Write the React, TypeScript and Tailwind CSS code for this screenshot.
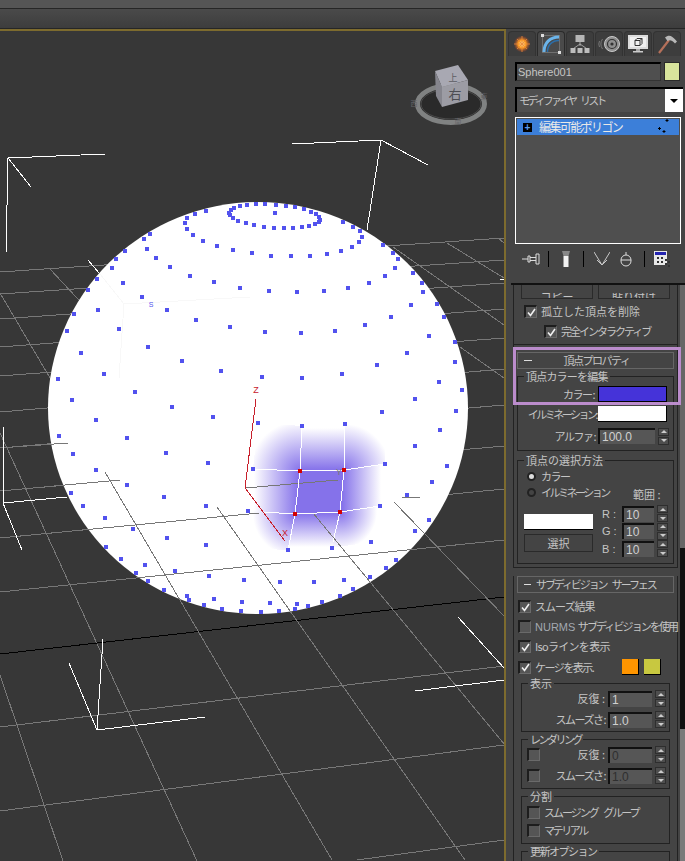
import type { ReactNode } from 'react';

type Seg = [number, number, number, number];

// grid lines behind the sphere
const gridBack: Seg[] = [
  [0, 272, 504, 238], [0, 294, 504, 260], [0, 319, 504, 283], [0, 347, 504, 309],
  [0, 376, 504, 338], [0, 412, 504, 369], [0, 448, 504, 405], [0, 491, 504, 446],
  [0, 538, 504, 489], [0, 592, 504, 540], [0, 727, 504, 666], [0, 811, 504, 745], [357, 860, 504, 840],
  [49, 268, 90, 312], [0, 293, 60, 395], [0, 433, 197, 861], [105, 472, 332, 860], [217, 507, 465, 860],
  [313, 513, 505, 745], [394, 502, 505, 617], [0, 675, 63, 861],
  [447, 243, 504, 278], [393, 247, 504, 325], [460, 347, 504, 378], [498, 238, 504, 243],
];

// grid lines in front of the sphere
const gridFront: Seg[] = [
  [0, 448, 68, 443], [0, 491, 120, 480], [245, 488, 338, 480], [0, 538, 259, 513], [402, 498, 420, 497],
  [0, 592, 504, 540], [105, 472, 332, 860], [217, 507, 465, 860], [313, 513, 505, 745], [394, 502, 505, 617],
];

const brackets: Seg[] = [
  [8, 158, 105, 154], [8, 158, 6, 253], [8, 158, 31, 187],
  [381, 140, 292, 144], [381, 140, 428, 165], [381, 140, 367, 230],
  [88, 260, 99, 273], [3, 427, 3, 503], [3, 503, 67, 497], [3, 503, 22, 550],
  [97, 730, 103, 639], [97, 730, 205, 717], [97, 730, 69, 663],
  [458, 617, 504, 668], [415, 691, 504, 680], [500, 279, 504, 279],
];

const wire: Seg[] = [
  [302, 426, 300, 471], [300, 471, 295, 514], [295, 514, 288, 550],
  [345, 424, 344, 470], [344, 470, 340, 512], [340, 512, 333, 542],
  [253, 469, 300, 471], [300, 471, 344, 470], [344, 470, 385, 464],
  [263, 512, 295, 514], [295, 514, 340, 512], [340, 512, 380, 506],
];

const nearDots = [
  [258, 423], [302, 426], [345, 424], [253, 469], [385, 464], [248, 511],
  [380, 506], [288, 550], [332, 548], [371, 542],
];
const redDots = [[300, 471], [344, 470], [295, 514], [340, 512]];
const cornerRadius = [50, 46, 42, 37];

// how much each ring opens up, read off the reference (camera is close, so not a plain ellipse)
const ringOpen = [0.26, 0.29, 0.33, 0.42, 0.52, 0.5, 0.47, 0.395, 0.3, 0.2, 0.15, 0.12, 0.1];

// vertices of the sphere, 14 rings of 28 points
function sphereDots() {
  const out: number[][] = [[275, 213]];
  for (let i = 1; i < 14; i++) {
    const t = (i * Math.PI) / 14;
    const r = 204 * Math.sin(t);
    const xc = 258 + 17 * Math.cos(t);
    const yc = 408 + 208 * Math.sin(t - (72.8 * Math.PI) / 180);
    for (let j = 0; j < 28; j++) {
      const l = ((j * 360) / 28 + 11.65) * (Math.PI / 180);
      const z = Math.cos(t) * 0.308 + Math.sin(t) * Math.cos(l) * 0.952;
      if (z < -0.02) continue;
      const dx = r * Math.sin(l);
      let x = xc + dx;
      let y = yc - ringOpen[i - 1] * r * (1 - Math.cos(l)) + 0.07 * dx;
      const n = Math.hypot((x - 258) / 210, (y - 408) / 206);
      if (n > 1.3) continue;
      // dots past the rim sit on the silhouette
      if (n > 0.99) {
        x = 258 + ((x - 258) / n) * 0.99;
        y = 408 + ((y - 408) / n) * 0.99;
      }
      if (x > 240 && x < 395 && y > 412 && y < 556) continue;
      out.push([Math.round(x), Math.round(y)]);
    }
  }
  return out;
}

function Lines({ items, cls }: { items: Seg[]; cls: string }) {
  return (
    <g className={cls}>
      {items.map(([x1, y1, x2, y2], i) => (
        <line key={i} x1={x1} y1={y1} x2={x2} y2={y2} />
      ))}
    </g>
  );
}

function Viewport() {
  const purple = '#8572ea';
  return (
    <svg viewBox="0 31 504 830" className="block w-[504px] h-[830px]" shapeRendering="crispEdges">
      <defs>
        <linearGradient id="gt" gradientUnits="userSpaceOnUse" x1="0" y1="470" x2="0" y2="428">
          <stop offset="0" stopColor={purple} /><stop offset="1" stopColor="#fff" />
        </linearGradient>
        <linearGradient id="gr" gradientUnits="userSpaceOnUse" x1="342" y1="0" x2="381" y2="0">
          <stop offset="0" stopColor={purple} /><stop offset="1" stopColor="#fff" />
        </linearGradient>
        <linearGradient id="gb" gradientUnits="userSpaceOnUse" x1="0" y1="513" x2="0" y2="547">
          <stop offset="0" stopColor={purple} /><stop offset="1" stopColor="#fff" />
        </linearGradient>
        <linearGradient id="gl" gradientUnits="userSpaceOnUse" x1="298" y1="0" x2="254" y2="0">
          <stop offset="0" stopColor={purple} /><stop offset="1" stopColor="#fff" />
        </linearGradient>
        {redDots.map(([x, y], i) => (
          <radialGradient key={i} id={`gc${i}`} gradientUnits="userSpaceOnUse" cx={x} cy={y} r={cornerRadius[i]}>
            <stop offset="0" stopColor={purple} /><stop offset="1" stopColor="#fff" />
          </radialGradient>
        ))}
      </defs>

      <Lines items={gridBack} cls="stroke-[#787878]" />
      <line x1="0" y1="654" x2="504" y2="597" stroke="#000" />

      {/* nav cube */}
      <g shapeRendering="auto">
        <ellipse cx="451" cy="104" rx="33.500" ry="18.500" fill="#2a2a2a" stroke="#808282" strokeWidth="5" />
        <ellipse cx="451" cy="104" rx="30" ry="15" fill="none" stroke="#4c4c4c" strokeWidth="1" />
        <polygon points="435,71 458,65 468,80 442,87" fill="#a8a8b2" />
        <polygon points="435,71 442,87 442,107 436,96" fill="#85858d" />
        <polygon points="442,87 468,80 468,100 442,107" fill="#9c9ca4" />
        <text x="453" y="81" fontSize="9" fill="#5c5c62" textAnchor="middle" fontFamily="Noto Sans CJK JP">上</text>
        <text x="455" y="99" fontSize="13" fill="#4c4c52" textAnchor="middle" fontFamily="Noto Sans CJK JP">右</text>
        <text x="414" y="106" fontSize="7" fill="#66666a" textAnchor="middle" fontFamily="Noto Sans CJK JP">西</text>
        <text x="458" y="124" fontSize="7" fill="#66666a" textAnchor="middle" fontFamily="Noto Sans CJK JP">南</text>
        <text x="484" y="99" fontSize="7" fill="#58585c" textAnchor="middle" fontFamily="Noto Sans CJK JP">東</text>
      </g>

      <ellipse cx="258" cy="408" rx="210" ry="206" fill="#fff" shapeRendering="auto" />
      <polyline points="100,274 124,304 250,297" fill="none" stroke="#f8f8f8" />
      <line x1="124" y1="304" x2="119" y2="378" stroke="#f8f8f8" />

      {/* soft selection falloff */}
      <polygon points="302,426 345,424 344,470 300,471" fill="url(#gt)" />
      <polygon points="344,470 385,464 380,506 340,512" fill="url(#gr)" />
      <polygon points="295,514 340,512 332,548 288,550" fill="url(#gb)" />
      <polygon points="253,469 300,471 295,514 248,511" fill="url(#gl)" />
      <polygon points="258,423 302,426 300,471 253,469" fill="url(#gc0)" />
      <polygon points="345,424 385,422 385,464 344,470" fill="url(#gc1)" />
      <polygon points="248,511 295,514 288,550 245,548" fill="url(#gc2)" />
      <polygon points="340,512 380,506 371,542 332,548" fill="url(#gc3)" />
      <polygon points="300,471 344,470 340,512 295,514" fill={purple} />

      <Lines items={gridFront} cls="stroke-[#777777]" />
      <Lines items={wire} cls="stroke-white" />
      <Lines items={brackets} cls="stroke-white" />
      <polyline points="256,399 245,488 285,541" fill="none" stroke="#c8202c" />

      <text x="256" y="393" fontSize="9" fill="#c8202c" textAnchor="middle" fontFamily="Liberation Sans">Z</text>
      <text x="285" y="536" fontSize="9" fill="#c8202c" textAnchor="middle" fontFamily="Liberation Sans">X</text>
      <text x="339" y="475" fontSize="9" fill="#777" textAnchor="middle" fontFamily="Liberation Sans">Y</text>
      <text x="151" y="307" fontSize="7" fill="#5252ee" textAnchor="middle" fontFamily="Liberation Sans">S</text>

      {sphereDots().concat(nearDots).map(([x, y], i) => (
        <rect key={i} x={x - 2} y={y - 2} width="4" height="4" fill="#5252ee" />
      ))}
      {redDots.map(([x, y], i) => (
        <rect key={i} x={x - 2} y={y - 2} width="4" height="4" fill="#d40000" />
      ))}
    </svg>
  );
}

function Tab({ active, children }: { active?: boolean; children: ReactNode }) {
  return (
    <div className={`w-[28px] h-[25px] rounded-t-[4px] flex items-center justify-center ${active ? 'bg-[#4a4a4a] border-t border-x border-[#2a2a2a]' : 'bg-[#3d3d3d] border-t border-x border-[#333333]'}`}>
      {children}
    </div>
  );
}

function Tabs() {
  return (
    <div className="flex gap-[1px] pl-[2px] pt-[2px]">
      <Tab>
        <svg width="18" height="18" viewBox="0 0 18 18">
          <defs>
            <radialGradient id="sun">
              <stop offset="0" stopColor="#fff3b0" /><stop offset="0.5" stopColor="#ff9a1e" /><stop offset="1" stopColor="#a3402a" stopOpacity="0.2" />
            </radialGradient>
          </defs>
          <circle cx="9" cy="9" r="8" fill="url(#sun)" />
          <path d="M9 1v16M1 9h16M4 4l10 10M14 4L4 14" stroke="#e8883a" strokeWidth="0.8" />
        </svg>
      </Tab>
      <Tab active>
        <svg width="20" height="20" viewBox="0 0 20 20">
          <rect x="1.5" y="1.5" width="17" height="17" fill="none" stroke="#8a8a8a" strokeWidth="0.6" />
          <path d="M3 18C3 9 9 3 18 3" fill="none" stroke="#6bb4ea" strokeWidth="3" />
          <path d="M6.5 18C6.5 11 11 6.5 18 6.5" fill="none" stroke="#2c6ea8" strokeWidth="1.5" />
          <rect x="0" y="0" width="3" height="3" fill="#ddd" />
          <rect x="17" y="17" width="3" height="3" fill="#ddd" />
        </svg>
      </Tab>
      <Tab>
        <svg width="20" height="20" viewBox="0 0 20 20">
          <rect x="5.5" y="1" width="9" height="7" fill="#b5b5b5" />
          <path d="M10 8v4M10 10L3.500 14.500M10 10l6.500 4.500" stroke="#bbb" strokeWidth="0.8" fill="none" />
          <rect x="0.500" y="14" width="5" height="5" fill="#bdbdbd" />
          <rect x="7.500" y="14" width="5" height="5" fill="#bdbdbd" />
          <rect x="14.500" y="14" width="5" height="5" fill="#bdbdbd" />
        </svg>
      </Tab>
      <Tab>
        <svg width="24" height="18" viewBox="0 0 24 18" fill="none">
          <circle cx="15" cy="9" r="7.500" fill="#8f8f8f" stroke="#c8c8c8" />
          <circle cx="15" cy="9" r="4.500" stroke="#333" strokeWidth="1.200" />
          <circle cx="15" cy="9" r="1.600" fill="#333" />
          <path d="M5.500 4a9 9 0 0 0 0 10M2.500 6a7 7 0 0 0 0 6" stroke="#777" />
        </svg>
      </Tab>
      <Tab>
        <svg width="22" height="20" viewBox="0 0 22 20" fill="none">
          <rect x="1" y="1" width="20" height="14" fill="#dcdcdc" />
          <rect x="3" y="3" width="16" height="10" fill="#f0f0f0" />
          <path d="M8 6.500l2-2h5v5l-2 2H8zM8 6.500h5v5M13 6.500l2-2" stroke="#333" />
          <rect x="9" y="15" width="4" height="2" fill="#aaa" />
          <rect x="6" y="17" width="10" height="1.500" fill="#ccc" />
        </svg>
      </Tab>
      <Tab>
        <svg width="22" height="20" viewBox="0 0 22 20" fill="none">
          <path d="M3 19L13 6" stroke="#b5705a" strokeWidth="2.200" />
          <path d="M9 3.500c4-3 7-2 12 4l-2 2c-3-3-5-4-7.500-2.500z" fill="#b8b8b8" />
        </svg>
      </Tab>
    </div>
  );
}

function Toolbar() {
  const sep = <div className="w-px h-[16px] bg-black" />;
  return (
    <div className="mt-[5px] h-[19px] flex items-center pl-[16px]">
      <svg width="18" height="12" viewBox="0 0 18 12" className="mr-[8px]"><path d="M0 6h6M6 3h2v6H6zM8 4.500h6M8 7.500h6M14 1h3v10h-3z" stroke="#ddd" fill="none" /></svg>
      {sep}
      <svg width="10" height="16" viewBox="0 0 10 16" className="mx-[12px]"><rect x="2.500" y="5" width="5" height="11" fill="#f2f2f2" /><path d="M1 0h8L7.500 5h-5z" fill="#888" /></svg>
      {sep}
      <svg width="16" height="16" viewBox="0 0 16 16" fill="none" className="ml-[10px]"><path d="M0 1l8 13 8-13M3 9l5 5 5-5" stroke="#c8c8c8" /></svg>
      <svg width="12" height="16" viewBox="0 0 12 16" fill="none" className="ml-[10px] mr-[12px]"><rect x="1" y="4" width="10" height="11" rx="5" stroke="#ddd" /><path d="M1 9h10M6 4V1" stroke="#ddd" /></svg>
      {sep}
      <svg width="17" height="16" viewBox="0 0 17 16" className="ml-[9px]"><rect x="0" y="0" width="13" height="14" fill="#e8e8e8" /><rect x="1" y="1" width="11" height="3" fill="#2424b0" /><path d="M3 6h2v2H3zM7 6h2v2H7zM3 10h2v2H3zM7 10h2v2H7zM11 8h2v2h-2zM14 10h2v2h-2zM11 12h2v2h-2zM14 14h2v2h-2z" fill="#333" /></svg>
    </div>
  );
}

function CheckBox({ on }: { on?: boolean }) {
  return (
    <div className="w-[13px] h-[13px] shrink-0 bg-[#555555] border-t-2 border-l-2 border-t-[#1d1d1d] border-l-[#1d1d1d] border-b border-r border-b-[#6a6a6a] border-r-[#6a6a6a] flex items-center justify-center">
      {on && (
        <svg width="9" height="9" viewBox="0 0 9 9" fill="none"><path d="M1 4.500l2.500 3L8 1" stroke="#f0f0f0" strokeWidth="1.600" /></svg>
      )}
    </div>
  );
}

function CheckRow({ on, children, cls = '', text = '' }: { on?: boolean; children: ReactNode; cls?: string; text?: string }) {
  return (
    <div className={`flex items-center gap-[4px] ${cls}`}>
      <CheckBox on={on} />
      <span className={`whitespace-nowrap leading-none ${text}`}>{children}</span>
    </div>
  );
}

function Spin() {
  return (
    <div className="w-[11px] h-[17px] shrink-0 flex flex-col gap-px">
      <div className="flex-1 bg-[#4e4e4e] border border-[#2e2e2e] flex items-center justify-center">
        <div className="w-0 h-0 border-x-[3px] border-x-transparent border-b-[3px] border-b-[#cccccc]" />
      </div>
      <div className="flex-1 bg-[#4e4e4e] border border-[#2e2e2e] flex items-center justify-center">
        <div className="w-0 h-0 border-x-[3px] border-x-transparent border-t-[3px] border-t-[#cccccc]" />
      </div>
    </div>
  );
}

function Spinner({ value, w, dim }: { value: string; w: string; dim?: boolean }) {
  return (
    <div className="flex items-center gap-[3px]">
      <div className={`${w} h-[16px] bg-[#565656] border-t-2 border-l-2 border-[#111111] flex items-center pl-[2px] font-['Liberation_Sans',sans-serif] text-[12px] ${dim ? 'text-[#2f2f2f]' : 'text-[#d0d0d0]'}`}>
        {value}
      </div>
      <Spin />
    </div>
  );
}

function Group({ title, cls, text = '', children }: { title: string; cls: string; text?: string; children?: ReactNode }) {
  return (
    <div className={`relative border border-[#222222] ${cls}`}>
      <span className={`absolute -top-[8px] left-[6px] bg-[#444444] px-[2px] leading-[14px] whitespace-nowrap ${text}`}>{title}</span>
      {children}
    </div>
  );
}

function Header({ children, cls = '' }: { children: ReactNode; cls?: string }) {
  return (
    <div className={`h-[17px] mx-[3px] border border-[#666666] bg-[#444444] flex items-center leading-none ${cls}`}>
      {children}
    </div>
  );
}

function VertexRollout() {
  return (
    <div className="pt-[7px] border-x border-b border-[#222222] h-[223px] mb-[8px]">
      <Header cls="relative justify-center">
        <span className="absolute left-[6px] top-[7px] w-[8px] h-[1px] bg-[#dddddd]" />
        <span className="pl-[2px] tracking-[-1.5px]">頂点プロパティ</span>
      </Header>
      <Group title="頂点カラーを編集" text="tracking-[-0.8px]" cls="mt-[7px] mx-[3px] h-[75px]">
        <div className="flex items-center justify-end h-[16px] mt-[9px] pr-[6px] gap-[4px]">
          <span className="tracking-[-1.5px] whitespace-nowrap">カラー :</span>
          <div className="w-[69px] h-[16px] bg-[#4533d9] border border-black" />
        </div>
        <div className="flex items-center justify-end h-[16px] mt-[4px] pr-[6px] gap-[2px]">
          <span className="tracking-[-2.5px] whitespace-nowrap">イルミネーション:</span>
          <div className="w-[69px] h-[16px] bg-white border-b border-r border-black" />
        </div>
        <div className="flex items-center justify-end h-[16px] mt-[6px] pr-[4px] gap-[3px]">
          <span className="tracking-[-1.5px] whitespace-nowrap">アルファ :</span>
          <Spinner value="100.0" w="w-[57px]" />
        </div>
      </Group>
      <Group title="頂点の選択方法" cls="mt-[9px] mx-[3px] h-[104px]">
        <div className="flex items-center gap-[5px] pl-[9px] mt-[7px] h-[16px]">
          <span className="w-[9px] h-[9px] rounded-full bg-[#dddddd] border-2 border-[#222222]" />
          <span className="tracking-[-1.5px]">カラー</span>
        </div>
        <div className="flex items-center gap-[5px] pl-[9px] h-[16px]">
          <span className="w-[9px] h-[9px] rounded-full bg-[#444444] border-2 border-[#222222]" />
          <span className="tracking-[-2.5px] w-[76px] whitespace-nowrap">イルミネーション</span>
          <span className="ml-[11px] mt-[4px] whitespace-nowrap">範囲 :</span>
        </div>
        <div className="flex mt-[5px] pl-[6px]">
          <div className="w-[69px] mt-[9px]">
            <div className="h-[16px] bg-white border-b border-black" />
            <div className="h-[18px] mt-[4px] border border-[#2a2a2a] flex items-center justify-center">選択</div>
          </div>
          <div className="ml-[9px] font-['Liberation_Sans',sans-serif] text-[11px]">
            {['R', 'G', 'B'].map((c) => (
              <div key={c} className="flex items-center h-[17.500px] gap-[4px]">
                <span className="w-[16px] whitespace-nowrap">{c} :</span>
                <Spinner value="10" w="w-[32px]" />
              </div>
            ))}
          </div>
        </div>
      </Group>
    </div>
  );
}

function SubdivRollout() {
  return (
    <div className="border-x border-[#222222] h-[300px]">
      <Header cls="gap-[5px] px-[6px]">
        <span className="w-[7px] h-px bg-[#dddddd] shrink-0" />
        <span className="whitespace-nowrap tracking-[-2.1px] [word-spacing:5px]">サブディビジョン サーフェス</span>
      </Header>
      <div className="pl-[4px] mt-[7px] flex flex-col gap-[7px] whitespace-nowrap">
        <CheckRow on text="tracking-[-1px]">スムーズ結果</CheckRow>
        <CheckRow><span className="text-[#a3a9b0] font-['Liberation_Sans',sans-serif]">NURMS</span> <span className="tracking-[-1.900px]">サブディビジョンを使用</span></CheckRow>
        <CheckRow on text="tracking-[-0.7px]">Isoラインを表示</CheckRow>
        <div className="flex items-center -mt-[1px]">
          <CheckRow on cls="w-[104px]" text="tracking-[-1.500px]">ケージを表示.</CheckRow>
          <div className="w-[17px] h-[16px] bg-[#ff9500] border-r border-b border-black" />
          <div className="w-[17px] h-[16px] ml-[5px] bg-[#c8c840] border-r border-b border-black" />
        </div>
      </div>
      <Group title="表示" cls="mt-[8px] mx-[7px] h-[49px]">
        <div className="flex items-center justify-end h-[17px] mt-[6px] pr-[3px] gap-[3px]"><span className="whitespace-nowrap">反復 :</span><Spinner value="1" w="w-[44px]" /></div>
        <div className="flex items-center justify-end h-[17px] mt-[4px] pr-[3px] gap-[3px]"><span className="whitespace-nowrap tracking-[-1.5px]">スムーズさ :</span><Spinner value="1.0" w="w-[44px]" /></div>
      </Group>
      <Group title="レンダリング" text="tracking-[-2.500px]" cls="mt-[7px] mx-[7px] h-[50px]">
        <div className="flex items-center h-[17px] mt-[6px] pl-[5px] pr-[3px] gap-[3px]"><CheckBox /><span className="ml-auto whitespace-nowrap">反復 :</span><Spinner value="0" w="w-[44px]" dim /></div>
        <div className="flex items-center h-[17px] mt-[4px] pl-[5px] pr-[3px] gap-[3px]"><CheckBox /><span className="ml-auto whitespace-nowrap tracking-[-1.5px]">スムーズさ :</span><Spinner value="1.0" w="w-[44px]" dim /></div>
      </Group>
      <Group title="分割" cls="mt-[7px] mx-[7px] h-[48px]">
        <div className="pl-[5px] pt-[9px] flex flex-col gap-[5px]">
          <CheckRow text="tracking-[-2px] [word-spacing:5px]">スムージング グループ</CheckRow>
          <CheckRow text="tracking-[-2.400px]">マテリアル</CheckRow>
        </div>
      </Group>
      <Group title="更新オプション" text="tracking-[-1.500px]" cls="mt-[7px] mx-[7px] h-[30px]" />
    </div>
  );
}

function Panel() {
  return (
    <div className="flex-1 h-full bg-[#444444] flex flex-col overflow-hidden font-['Noto_Sans_CJK_JP',sans-serif] text-[11px] text-[#c4c4c4]">
      <Tabs />
      <div className="mt-[6px] ml-[9px] flex gap-[3px] h-[19px]">
        <div className="w-[146px] bg-[#4f4f4f] border-t-2 border-l-2 border-black border-b border-r border-b-[#333333] border-r-[#333333] flex items-center pl-[1px] font-['Liberation_Sans',sans-serif] text-[11px]">Sphere001</div>
        <div className="w-[16px] bg-[#d8e49c] border border-[#2a2a2a]" />
      </div>
      <div className="mt-[6px] ml-[9px] w-[168px] h-[25px] bg-[#4f4f4f] border-t-2 border-l-2 border-black flex items-center">
        <span className="pl-[2px] flex-1 tracking-[-2.8px] [word-spacing:5px] whitespace-nowrap">モディファイヤ リスト</span>
        <div className="w-[18px] h-full bg-white flex items-center justify-center">
          <div className="w-0 h-0 border-x-[4px] border-x-transparent border-t-[4px] border-t-black" />
        </div>
      </div>
      <div className="mt-[5px] ml-[9px] w-[166px] h-[127px] bg-[#4f4f4f] border border-white p-px">
        <div className="h-[16px] bg-[#3c7fd9] flex items-center pl-[6px] text-[#e8e8e8] text-[12px] relative">
          <span className="w-[9px] h-[9px] bg-black text-[#5a9cf0] text-[10px] leading-[9px] text-center font-bold font-['Liberation_Sans',sans-serif]">+</span>
          <span className="ml-[7px] tracking-[-1.6px]">編集可能ポリゴン</span>
          <svg width="12" height="14" viewBox="0 0 12 14" className="absolute right-[9px] top-0"><path d="M9 0v3M7.500 1.500h3M1.500 8v3M0 9.500h3M6 11v3M4.500 12.500h3" stroke="#000" /></svg>
        </div>
      </div>
      <Toolbar />
      <div className="mt-[15px] ml-[5px] h-[2px] bg-[#111111] shrink-0" />
      <div className="flex flex-1 min-h-0">
        <div className="w-[174px] pl-[7px] pr-[2px] overflow-hidden">
          <div className="h-[60px] border-x border-b border-[#222222]">
            <div className="flex gap-[5px] px-[7px] h-[14px] overflow-hidden">
              {['コピー', '貼り付け'].map((t) => (
                <div key={t} className="w-[72px] h-[14px] border border-[#2a2a2a] border-t-0 flex items-end justify-center">
                  <span className="leading-[7px] h-[5px] overflow-hidden text-[11px]">{t}</span>
                </div>
              ))}
            </div>
            <CheckRow on cls="ml-[10px] mt-[6px]">孤立した頂点を削除</CheckRow>
            <CheckRow on cls="ml-[30px] mt-[7px]" text="tracking-[-2px]">完全インタラクティブ</CheckRow>
          </div>
          <VertexRollout />
          <SubdivRollout />
        </div>
        <div className="w-[5px] flex flex-col">
          <div className="h-[263px] bg-[#666666]" />
          <div className="h-[181px] bg-[#111111]" />
          <div className="flex-1 bg-[#7a7a7a]" />
        </div>
      </div>
    </div>
  );
}

export default function App() {
  return (
    <div className="relative w-[685px] h-[861px] overflow-hidden bg-[#444444] flex flex-col">
      {/* title strips */}
      <div className="h-[8px] bg-[#555555] shrink-0" />
      <div className="h-[21px] shrink-0 border-y border-[#262626] bg-gradient-to-b from-[#4a4a4a] to-[#3d3d3d]" />

      <div className="flex flex-1 min-h-0">
        <div className="w-[506px] h-[832px] bg-[#373737] border-t-2 border-r-2 border-[#7d6b2e] overflow-hidden shrink-0">
          <Viewport />
        </div>
        <Panel />
      </div>

      {/* highlight frame drawn over the panel */}
      <div className="absolute left-[513px] top-[347px] w-[168px] h-[58px] border-[3px] border-[#bb8ccc] pointer-events-none" />
    </div>
  );
}
